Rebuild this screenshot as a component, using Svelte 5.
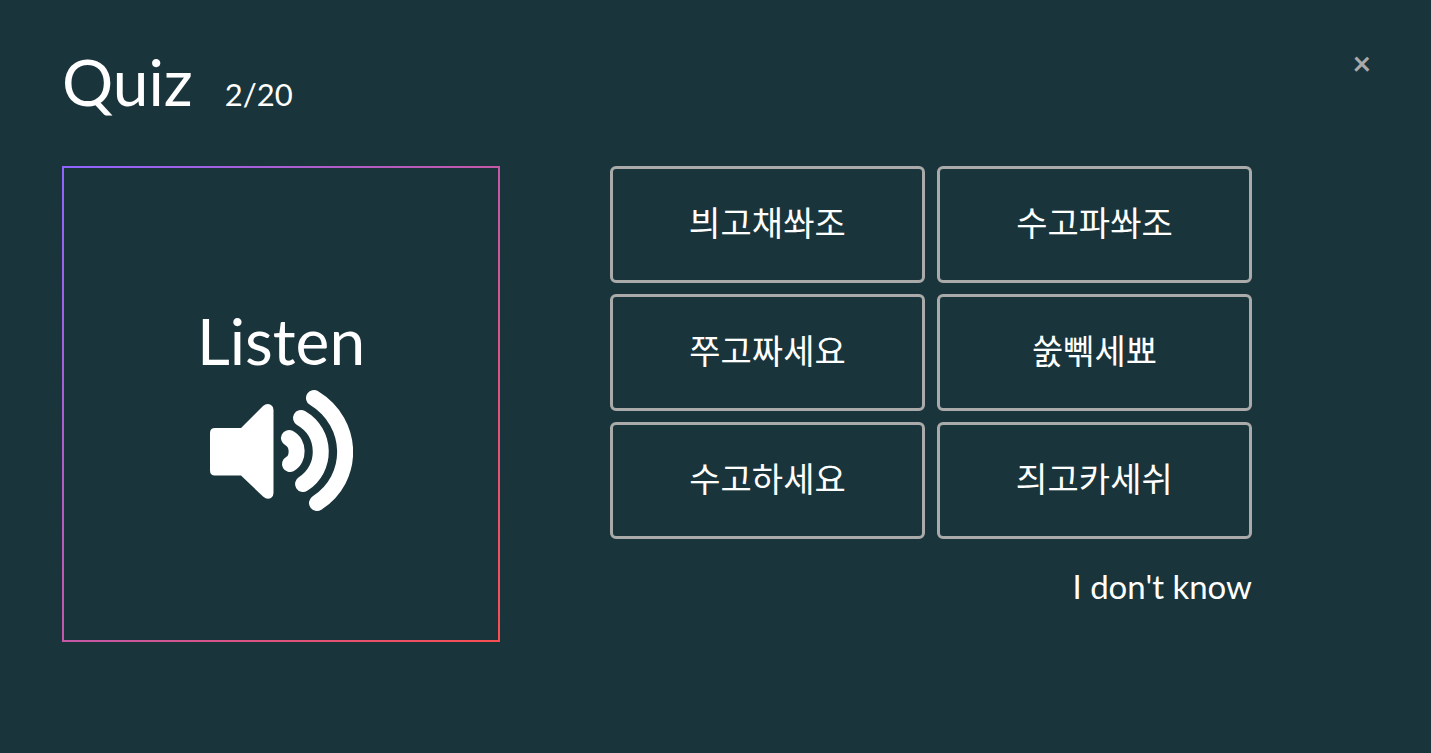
<script>
  const total = 20;

  let current = 2;
  let selected = null;

  const answers = [
    '븨고채쏴조',
    '수고파쏴조',
    '쭈고짜세요',
    '쑰뻮세뾰',
    '수고하세요',
    '즤고카세쉬'
  ];

  function choose(answer) {
    selected = answer;
  }

  function skip() {
    selected = null;
    current = Math.min(current + 1, total);
  }
</script>

<main>
  <header>
    <h1>Quiz</h1>
    <span class="progress">{current}/{total}</span>
    <button class="close" aria-label="Close">×</button>
  </header>

  <div class="quiz">
    <button class="listen">
      <span>Listen</span>
      <svg viewBox="0 0 144 124" aria-hidden="true">
        <path
          d="M6 39H32L54 17Q58 13.500 62 16Q64.500 17.500 64.500 21V104Q64.500 107.500 62 109Q58 111 54 107.500L32 86.500H6Q1 86.500 1 81.500V44Q1 39 6 39Z"
          fill="currentColor"
        />
        <g fill="none" stroke="currentColor" stroke-width="16" stroke-linecap="round">
          <path d="M80 49C90 54 90 70 81 75" />
          <path d="M92 29C118 44 118 80 94 95" />
          <path d="M105 9C146 34 146 90 108 114" />
        </g>
      </svg>
    </button>

    <div class="choices">
      <div class="answers">
        {#each answers as answer (answer)}
          <button
            class="answer"
            class:selected={selected === answer}
            on:click={() => choose(answer)}
          >
            {answer}
          </button>
        {/each}
      </div>
      <button class="skip" on:click={skip}>I don't know</button>
    </div>
  </div>
</main>

<style>
  :global(body) {
    background: #19353b;
  }
  main {
    padding: 46px 60px 48px 62px;
    color: white;
    font-family: Lato, 'Noto Sans CJK KR', sans-serif;
    font-size: 34px;
  }
  button {
    padding: 0;
    border: none;
    background: none;
    color: inherit;
    font: inherit;
    cursor: pointer;
  }
  header {
    display: flex;
    align-items: baseline;
    gap: 32px;
    height: 120px;
  }
  h1 {
    margin: 0;
    font-size: 64px;
    font-weight: 400;
    line-height: 72px;
  }
  .progress {
    font-size: 31px;
  }
  .close {
    align-self: flex-start;
    margin-left: auto;
    color: #aaa;
    font-size: 32px;
    font-weight: 700;
    line-height: 34px;
  }

  .quiz {
    display: grid;
    grid-template-columns: 438fr 642fr;
    align-items: start;
    gap: 110px;
    padding-right: 119px;
  }
  .listen {
    display: flex;
    flex-direction: column;
    align-items: center;
    justify-content: center;
    gap: 8px;
    height: 476px;
    padding-top: 6px;
    border: 2px solid;
    border-image: linear-gradient(to bottom right, #8f64ff, #f94d51) 1;
    font-size: 64px;
    line-height: 80px;
  }
  .listen svg {
    width: 144px;
    height: 124px;
  }
  .choices {
    display: flex;
    flex-direction: column;
  }
  .answers {
    display: grid;
    grid-template-columns: 1fr 1fr;
    gap: 11px 12px;
  }
  .answer {
    height: 117px;
    padding-bottom: 6px;
    border: 3px solid #aaa;
    border-radius: 6px;
  }
  .answer:hover,
  .selected {
    border-color: white;
  }
  .skip {
    align-self: flex-end;
    margin-top: 23px;
    font-size: 33px;
    line-height: 48px;
  }
</style>
